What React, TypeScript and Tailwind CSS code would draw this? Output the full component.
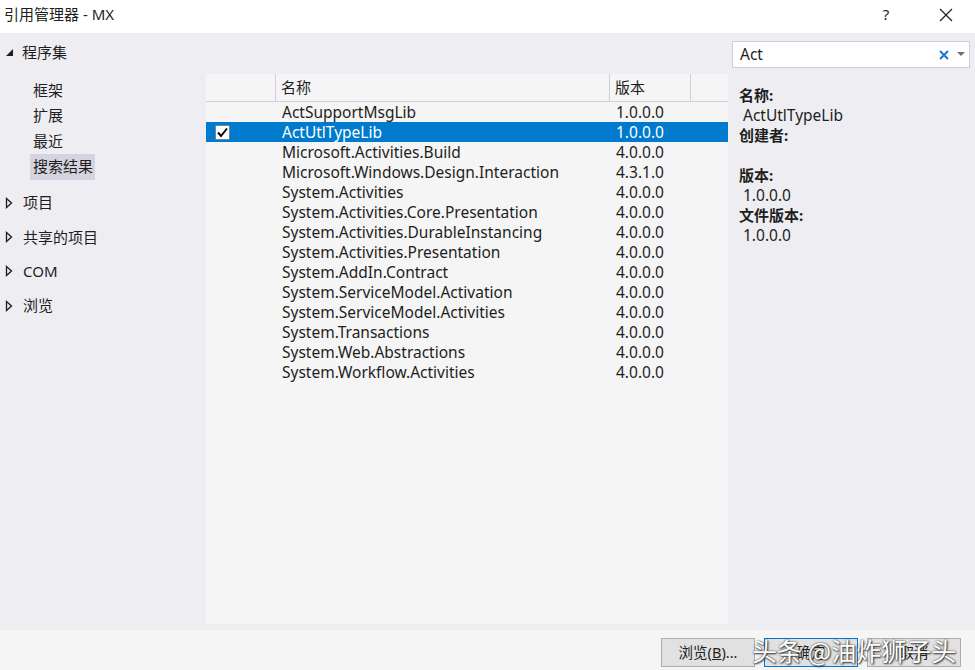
import React from "react";

const rows: [string, string][] = [
  ["ActSupportMsgLib", "1.0.0.0"],
  ["ActUtlTypeLib", "1.0.0.0"],
  ["Microsoft.Activities.Build", "4.0.0.0"],
  ["Microsoft.Windows.Design.Interaction", "4.3.1.0"],
  ["System.Activities", "4.0.0.0"],
  ["System.Activities.Core.Presentation", "4.0.0.0"],
  ["System.Activities.DurableInstancing", "4.0.0.0"],
  ["System.Activities.Presentation", "4.0.0.0"],
  ["System.AddIn.Contract", "4.0.0.0"],
  ["System.ServiceModel.Activation", "4.0.0.0"],
  ["System.ServiceModel.Activities", "4.0.0.0"],
  ["System.Transactions", "4.0.0.0"],
  ["System.Web.Abstractions", "4.0.0.0"],
  ["System.Workflow.Activities", "4.0.0.0"],
];

const font = { fontFamily: '"Noto Sans", "Noto Sans CJK SC", sans-serif' };

function TriOpen() {
  return (
    <svg width="9" height="9" viewBox="0 0 9 9" className="shrink-0">
      <path d="M8 1 L8 8 L1 8 Z" fill="#1e1e1e" />
    </svg>
  );
}
function TriClosed() {
  return (
    <svg width="8" height="12" viewBox="0 0 8 12" className="shrink-0">
      <path d="M1.5 1.5 L6.5 6 L1.5 10.5 Z" fill="none" stroke="#1e1e1e" strokeWidth="1.3" />
    </svg>
  );
}

export default function App() {
  return (
    <div className="w-[975px] h-[670px] flex flex-col overflow-hidden text-[#1e1e1e] relative" style={font}>
      {/* title bar */}
      <div className="h-[33px] bg-white flex items-center shrink-0">
        <div className="pl-[4px] text-[15px] flex-1 -mt-[4px]">引用管理器 - MX</div>
        <div className="w-[40px] text-center text-[15px] -mt-[4px] mr-[20px]">?</div>
        <div className="w-[40px] flex justify-center mr-[9px] -mt-[4px]">
          <svg width="14" height="14" viewBox="0 0 14 14">
            <path d="M1 1 L13 13 M13 1 L1 13" stroke="#1e1e1e" strokeWidth="1.2" />
          </svg>
        </div>
      </div>
      {/* main */}
      <div className="flex-1 bg-[#eeeef2] flex">
        {/* left nav */}
        <div className="w-[206px] shrink-0 text-[15px]">
          <div className="h-[36px] flex items-center gap-[8px] pl-[5px] mt-[1px]">
            <TriOpen />
            <span>程序集</span>
          </div>
          <div className="mt-[7px] flex flex-col">
            {["框架", "扩展", "最近"].map((t) => (
              <div key={t} className="h-[25px] flex items-center pl-[33px] mt-[0.5px]">{t}</div>
            ))}
            <div className="h-[26px] flex items-center ml-[30px] pl-[3px] w-[65px] bg-[#d4d4de]">搜索结果</div>
          </div>
          <div className="mt-[6px] flex flex-col">
            {["项目", "共享的项目", "COM", "浏览"].map((t) => (
              <div key={t} className="h-[34.3px] flex items-center gap-[10px] pl-[5px]">
                <TriClosed />
                <span>{t}</span>
              </div>
            ))}
          </div>
        </div>
        {/* list */}
        <div className="w-[522px] shrink-0 pt-[41px] pb-[6px] flex flex-col">
          <div className="flex-1 bg-[#f5f5f5] flex flex-col text-[15.5px]">
            <div className="h-[28px] flex border-b border-[#d0d0da] shrink-0 text-[15px]">
              <div className="w-[70px] border-r border-[#d0d0da]" />
              <div className="w-[334px] border-r border-[#d0d0da] pl-[5px] flex items-center">名称</div>
              <div className="w-[81px] border-r border-[#d0d0da] pl-[5px] flex items-center">版本</div>
              <div className="flex-1" />
            </div>
            {rows.map(([n, v], i) => {
              const sel = i === 1;
              return (
                <div key={n} className={`h-[20px] flex items-center ${sel ? "bg-[#007acc] text-white" : ""}`}>
                  <div className="w-[76px] shrink-0 flex items-center pl-[9px]">
                    {sel && (
                      <svg width="15" height="15" viewBox="0 0 15 15">
                        <rect x="0.5" y="0.5" width="14" height="14" fill="#fff" stroke="#555" strokeDasharray="1 1" />
                        <path d="M3 7.5 L6 11 L12 3.5" fill="none" stroke="#000" strokeWidth="2" />
                      </svg>
                    )}
                  </div>
                  <div className="w-[334px] shrink-0 leading-[20px]">{n}</div>
                  <div className="leading-[20px]">{v}</div>
                </div>
              );
            })}
          </div>
        </div>
        {/* right */}
        <div className="flex-1 pl-[4px] pr-[5px] pt-[8px]">
          <div className="h-[27px] bg-white border border-[#cccedb] flex items-center text-[15.5px]">
            <span className="pl-[7px] flex-1">Act</span>
            <svg width="12" height="12" viewBox="0 0 12 12" className="mr-[7px]">
              <path d="M2 2 L10 10 M10 2 L2 10" stroke="#1e78c8" strokeWidth="2" />
            </svg>
            <svg width="8" height="5" viewBox="0 0 8 5" className="mr-[4px]">
              <path d="M0 0 L8 0 L4 4 Z" fill="#717171" />
            </svg>
          </div>
          <div className="mt-[17px] pl-[7px] text-[15px] leading-[20px]">
            <div className="font-bold">名称:</div>
            <div className="pl-[4px] text-[15.5px]">ActUtlTypeLib</div>
            <div className="font-bold">创建者:</div>
            <div className="h-[20px]" />
            <div className="font-bold">版本:</div>
            <div className="pl-[4px] text-[15.5px]">1.0.0.0</div>
            <div className="font-bold">文件版本:</div>
            <div className="pl-[4px] text-[15.5px]">1.0.0.0</div>
          </div>
        </div>
      </div>
      {/* bottom bar */}
      <div className="h-[40px] bg-[#f5f5f5] shrink-0 flex justify-end items-start pt-[8px] pr-[14px] gap-[9px] text-[14.5px]">
        <button className="w-[94px] h-[29px] bg-[#e1e1e1] border border-[#adadad] flex items-center justify-center">
          浏览(<span className="underline">B</span>)...
        </button>
        <button className="w-[94px] h-[29px] bg-[#e1e1e1] border border-[#0078d7] flex items-center justify-center">
          确定
        </button>
        <button className="w-[94px] h-[29px] bg-[#e1e1e1] border border-[#adadad] flex items-center justify-center">
          取消
        </button>
      </div>
      {/* watermark */}
      <div
        className="absolute left-[752px] top-[632px] text-[25px] text-white whitespace-nowrap"
        style={{ textShadow: "0 0 2px #333, 1px 1px 2px #333", fontFamily: '"Noto Sans CJK SC", sans-serif' }}
      >
        头条 @油炸狮子头
      </div>
    </div>
  );
}
